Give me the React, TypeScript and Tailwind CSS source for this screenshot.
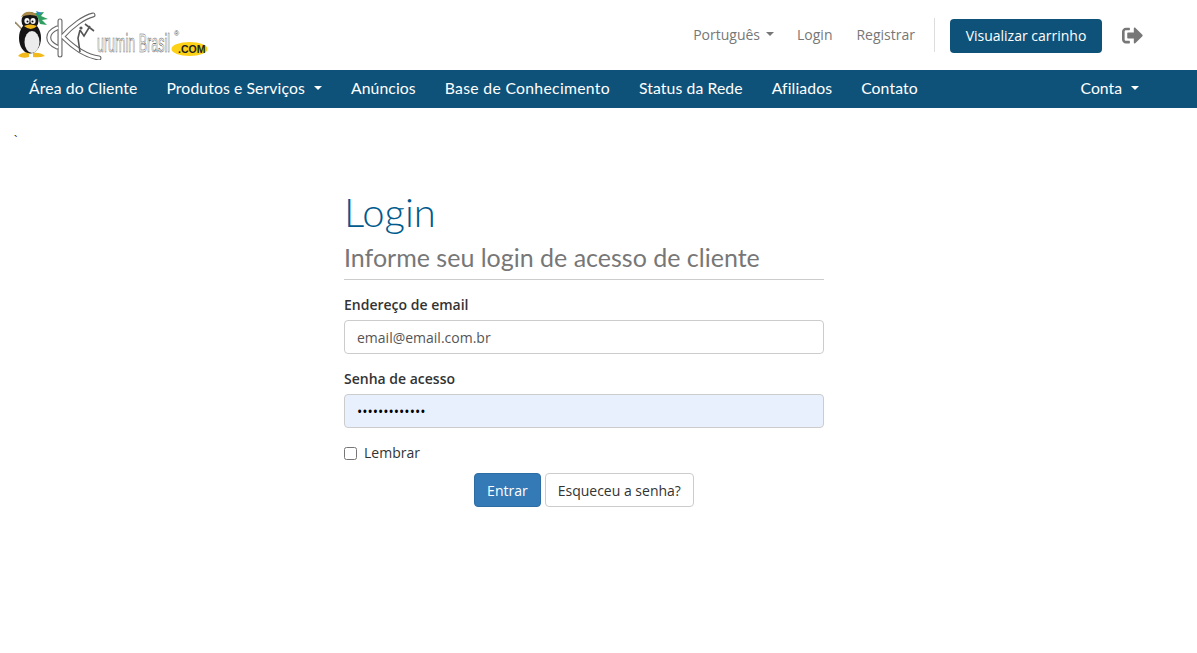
import { FaSignOutAlt } from "react-icons/fa";

const navLinks = [
  "Área do Cliente",
  "Produtos e Serviços",
  "Anúncios",
  "Base de Conhecimento",
  "Status da Rede",
  "Afiliados",
  "Contato",
];

const Caret = ({ className }: { className: string }) => (
  <span
    className={`inline-block w-0 h-0 border-x-[4px] border-x-transparent border-t-[4px] ${className}`}
  />
);

// drawn in page coordinates, the box sits at 15,10
const Logo = () => (
  <div className="relative w-[195px] h-[50px]">
    <svg width="195" height="50" viewBox="15 10 195 50" className="absolute left-0 top-0">
      {/* penguin */}
      <path d="M15 22 L38 46" stroke="#9a8a68" strokeWidth="1.6" />
      <ellipse cx="30" cy="38" rx="11" ry="15.5" fill="#161616" />
      <ellipse cx="32" cy="42" rx="7.5" ry="11" fill="#ececec" />
      <ellipse cx="30" cy="21" rx="8.5" ry="9" fill="#161616" />
      <ellipse cx="27" cy="21" rx="2.6" ry="3" fill="#f4f4f4" />
      <ellipse cx="33" cy="21" rx="2.6" ry="3" fill="#f4f4f4" />
      <circle cx="27.5" cy="21.5" r="1" fill="#111" />
      <circle cx="32.5" cy="21.5" r="1" fill="#111" />
      <path d="M24 26 Q30 23 37 26 Q31 32 24 26 Z" fill="#f2b91d" />
      <path d="M18 56 Q22 51 29 53 L29 57 Q23 59 18 56 Z M33 53 Q40 52 45 56 Q39 58 33 57 Z" fill="#f2b91d" />
      <path d="M21 17 Q24 11 31 12 Q37 13 39 17 Q30 13 21 17 Z" fill="#a98b4a" />
      <path d="M35 13 L44 12 L41 16 L48 19 L42 20 L47 25 L40 24 L38 18 Z" fill="#2f9e5f" />
      <path d="M36 11 L42 13 L38 15 Z" fill="#2f86c4" />
      {/* K, outlined stroke */}
      <g fill="none" strokeLinecap="round" strokeLinejoin="round">
        <g stroke="#666" strokeWidth="5">
          <path d="M60 21 L60 55" />
          <path d="M57 28 C46 33 46 42 57 47" />
          <path d="M63 36 C72 26 84 17 93 15" />
          <path d="M63 37 C72 46 84 56 99 58" />
        </g>
        <g stroke="#fff" strokeWidth="2.8">
          <path d="M60 21 L60 55" />
          <path d="M57 28 C46 33 46 42 57 47" />
          <path d="M63 36 C72 26 84 17 93 15" />
          <path d="M63 37 C72 46 84 56 99 58" />
        </g>
      </g>
      {/* figure with raised arm */}
      <path d="M80 30 L78 38 L80 52 M80 30 L84 36 L90 26 M85 24 L94 31" fill="none" stroke="#555" strokeWidth="1.6" />
      <circle cx="81" cy="28" r="1.6" fill="#555" />
      {/* .COM badge */}
      <ellipse cx="189.5" cy="49" rx="18" ry="7" fill="#fcd116" />
    </svg>
    <span className="absolute left-[82px] top-[20px] w-[76px] overflow-visible text-[25px] leading-[26px] text-white [-webkit-text-stroke:0.6px_#555] font-['Liberation_Sans',sans-serif] [transform:scaleX(0.5)] origin-left whitespace-nowrap">
      urumin Brasil
    </span>
    <span className="absolute left-[163px] top-[33px] text-[10.5px] leading-[12px] font-bold text-[#222] font-['Liberation_Sans',sans-serif]">
      .COM
    </span>
    <span className="absolute left-[159px] top-[20px] text-[7px] leading-[8px] text-[#555] font-['Liberation_Sans',sans-serif]">
      ®
    </span>
  </div>
);

const App = () => {
  return (
    <div className="min-h-[653px] bg-white font-['Open_Sans',sans-serif] text-[14px] text-[#333]">
      <header className="h-[70px] flex items-center justify-between pl-[15px] pr-[54px]">
        <Logo />
        <div className="flex items-center text-[#777]">
          <a className="flex items-center gap-[6px] -mt-[2px]">
            Português <Caret className="border-t-[#777]" />
          </a>
          <a className="ml-[23px] -mt-[2px]">Login</a>
          <a className="ml-[24px] -mt-[2px]">Registrar</a>
          <div className="ml-[19px] w-px h-[34px] bg-[#ddd]" />
          <button className="ml-[15px] mt-[2px] pb-[2px] h-[34px] w-[152px] rounded-[4px] bg-[#0f5279] text-white">
            Visualizar carrinho
          </button>
          <FaSignOutAlt className="ml-[20px] w-[21px] h-[21px] text-[#777]" />
        </div>
      </header>

      <nav className="h-[38px] pb-[2px] bg-[#0f5279] flex items-center justify-between pl-[29px] pr-[58px] text-white text-[15.75px] font-['Lato',sans-serif]">
        <ul className="flex items-center gap-[29px] tracking-[0.1px]">
          {navLinks.map((link) => (
            <li
              key={link}
              className={`flex items-center gap-[9px] ${link === "Base de Conhecimento" ? "tracking-[0.3px]" : ""}`}
            >
              {link}
              {link === "Produtos e Serviços" ? <Caret className="border-t-white" /> : null}
            </li>
          ))}
        </ul>
        <div className="flex items-center gap-[9px]">
          Conta <Caret className="border-t-white" />
        </div>
      </nav>

      <div className="ml-[14px] mt-[27px] h-[12px] text-[12px] leading-[12px] text-[#222]">`</div>

      <main className="w-[480px] ml-[344px] mt-[45px]">
        <h1 className="text-[40px] leading-[40px] text-[#005a8d] font-['Lato',sans-serif] font-light">Login</h1>
        <h2 className="mt-[10px] pb-[7px] border-b border-[#ccc] text-[25px] leading-[30px] text-[#777] font-['Lato',sans-serif]">
          Informe seu login de acesso de cliente
        </h2>

        <label className="block mt-[15px] font-semibold leading-[20px]">Endereço de email</label>
        <input
          readOnly
          placeholder="email@email.com.br"
          className="block mt-[5px] w-full h-[34px] px-3 rounded-[4px] border border-[#ccc] text-[14px] placeholder:text-[#555]"
        />

        <label className="block mt-[15px] font-semibold leading-[20px]">Senha de acesso</label>
        <input
          readOnly
          type="password"
          value="1234567890123"
          className="block mt-[5px] w-full h-[34px] px-3 rounded-[4px] border border-[#ccc] bg-[#e8f0fe] text-[14px] text-black"
        />

        <label className="flex items-center gap-[7px] mt-[15px] leading-[20px]">
          <input type="checkbox" className="w-[13px] h-[13px]" />
          Lembrar
        </label>

        <div className="flex justify-center gap-[4px] mt-[10px]">
          <button className="h-[34px] px-3 rounded-[4px] border border-[#2e6da4] bg-[#337ab7] text-white">
            Entrar
          </button>
          <button className="h-[34px] px-3 rounded-[4px] border border-[#ccc] bg-white text-[#333]">
            Esqueceu a senha?
          </button>
        </div>
      </main>
    </div>
  );
};

export default App;
